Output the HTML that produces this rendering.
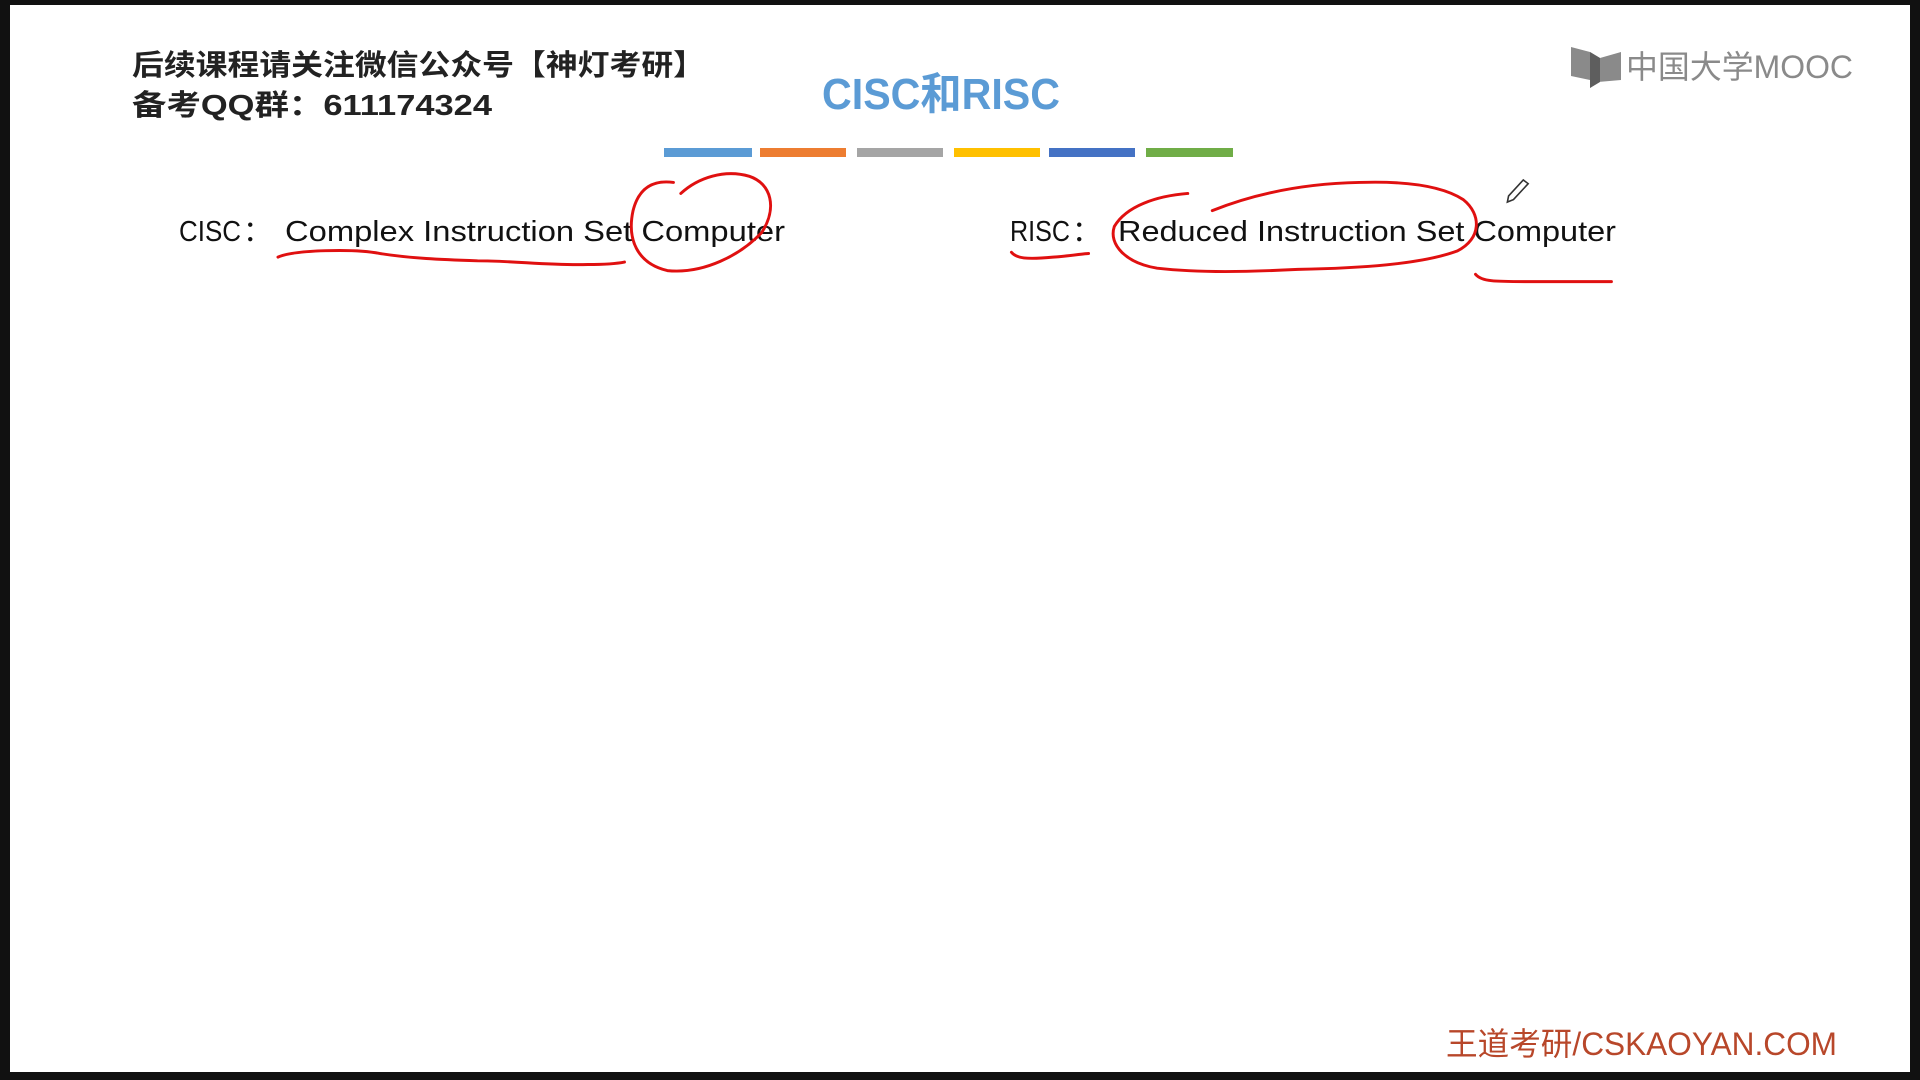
<!DOCTYPE html>
<html><head><meta charset="utf-8"><style>
html,body{margin:0;padding:0;background:#000;width:1920px;height:1080px;overflow:hidden}
svg{display:block}
</style></head><body>
<svg width="1920" height="1080" viewBox="0 0 1920 1080" xmlns="http://www.w3.org/2000/svg">
<rect x="0" y="0" width="1920" height="1080" fill="#111"/>
<rect x="10" y="5" width="1900" height="1067" fill="#fff"/>
<g font-family="'Liberation Sans','Noto Sans CJK SC',sans-serif">
<text x="132" y="75" font-size="29" font-weight="bold" fill="#222" textLength="573" lengthAdjust="spacingAndGlyphs">后续课程请关注微信公众号【神灯考研】</text>
<text x="132" y="115" font-size="29" font-weight="bold" fill="#222" textLength="360" lengthAdjust="spacingAndGlyphs">备考QQ群：611174324</text>
<text x="822" y="109" font-size="44" font-weight="bold" fill="#5b9bd5" textLength="238" lengthAdjust="spacingAndGlyphs">CISC和RISC</text>
<g>
<rect x="664" y="148" width="88" height="9" fill="#5b9bd5"/>
<rect x="760" y="148" width="86" height="9" fill="#ed7d31"/>
<rect x="857" y="148" width="86" height="9" fill="#a5a5a5"/>
<rect x="954" y="148" width="86" height="9" fill="#ffc000"/>
<rect x="1049" y="148" width="86" height="9" fill="#4472c4"/>
<rect x="1146" y="148" width="87" height="9" fill="#70ad47"/>
</g>
<text x="179" y="241" font-size="29" fill="#111" textLength="62" lengthAdjust="spacingAndGlyphs">CISC</text>
<text x="243" y="241" font-size="29" fill="#111">：</text>
<text x="285" y="241" font-size="29" fill="#111" textLength="500" lengthAdjust="spacingAndGlyphs">Complex Instruction Set Computer</text>
<text x="1010" y="241" font-size="29" fill="#111" textLength="60" lengthAdjust="spacingAndGlyphs">RISC</text>
<text x="1072" y="241" font-size="29" fill="#111">：</text>
<text x="1118" y="241" font-size="29" fill="#111" textLength="498" lengthAdjust="spacingAndGlyphs">Reduced Instruction Set Computer</text>
<!-- logo -->
<path d="M1571 47 L1590 52 L1600 58 L1621 52 L1621 80 L1598 82 L1590 88 L1590 80 L1571 76 Z" fill="#8a8a8a"/>
<path d="M1590 52 L1600 58 L1600 82 L1590 88 Z" fill="#5e5e5e"/>
<text x="1626" y="78" font-size="32" fill="#8a8a8a" textLength="227" lengthAdjust="spacingAndGlyphs">中国大学MOOC</text>
<text x="1446" y="1055" font-size="32" fill="#b8472a" textLength="391" lengthAdjust="spacingAndGlyphs">王道考研/CSKAOYAN.COM</text>
</g>
<g transform="scale(1.2245)" fill="none" stroke="#e01010" stroke-width="2.4" stroke-linecap="round" stroke-linejoin="round">
<path d="M227 210 C240 204 290 203 310 207 C335 211 360 212 390 213 C420 213 450 217 480 216 C495 216 505 215 510 214"/>
<path d="M550 149 C535 147 522 152 517 172 C512 195 520 215 545 221 C575 224 605 208 622 190 C635 170 630 150 612 144 C592 138 570 145 556 158"/>
<path d="M826 206 C830 211 838 212 860 210 C875 209 885 207 889 207"/>
<path d="M970 158 C945 160 920 168 910 185 C905 200 920 215 945 219 C980 223 1020 222 1060 220 C1110 219 1160 216 1190 205 C1210 195 1210 175 1195 163 C1175 150 1140 148 1110 149 C1060 150 1020 160 990 172"/>
<path d="M1205 224 C1210 230 1220 230 1250 230 C1280 230 1300 230 1316 230"/>
</g>
<g transform="scale(1.2245)" fill="none" stroke="#333" stroke-width="1.3">
<path d="M1232 160 L1244 147 L1248 150 L1236 163 L1231 165 Z"/>
</g>
</svg>
</body></html>
